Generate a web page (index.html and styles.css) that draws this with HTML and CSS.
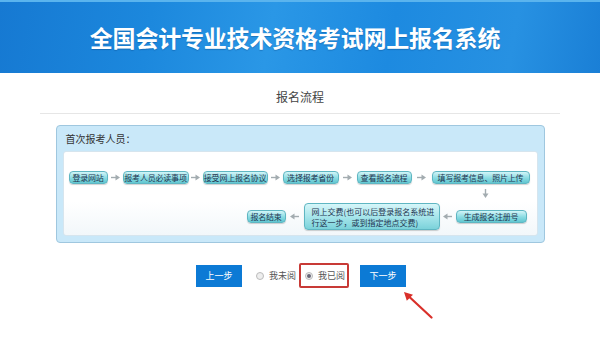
FILE: index.html
```html
<!DOCTYPE html>
<html lang="zh-CN">
<head>
    <meta charset="UTF-8">
    <title>全国会计专业技术资格考试网上报名系统</title>
    <link rel="stylesheet" href="styles.css">
</head>
<body>
    <div class="header">
        <h1>全国会计专业技术资格考试网上报名系统</h1>
    </div>

    <div class="sub-title">报名流程</div>

    <div class="panel">
        <div class="panel-head">首次报考人员：</div>
        <div class="panel-body">
            <!-- first row, left to right -->
            <div class="row row-top">
                <span class="step" style="width:39px">登录网站</span>
                <span class="arr" style="width:15px"><svg width="9" height="7" viewBox="0 0 9 7"><path d="M0 3.5h5" stroke="#a3acb0" stroke-width="1.4"/><path d="M4.5 .5L9 3.5 4.5 6.5z" fill="#a3acb0"/></svg></span>
                <span class="step" style="width:66px">报考人员必读事项</span>
                <span class="arr" style="width:14px"><svg width="9" height="7" viewBox="0 0 9 7"><path d="M0 3.5h5" stroke="#a3acb0" stroke-width="1.4"/><path d="M4.5 .5L9 3.5 4.5 6.5z" fill="#a3acb0"/></svg></span>
                <span class="step" style="width:65px">接受网上报名协议</span>
                <span class="arr" style="width:15px"><svg width="9" height="7" viewBox="0 0 9 7"><path d="M0 3.5h5" stroke="#a3acb0" stroke-width="1.4"/><path d="M4.5 .5L9 3.5 4.5 6.5z" fill="#a3acb0"/></svg></span>
                <span class="step" style="width:56px">选择报考省份</span>
                <span class="arr" style="width:18px"><svg width="9" height="7" viewBox="0 0 9 7"><path d="M0 3.5h5" stroke="#a3acb0" stroke-width="1.4"/><path d="M4.5 .5L9 3.5 4.5 6.5z" fill="#a3acb0"/></svg></span>
                <span class="step" style="width:55px">查看报名流程</span>
                <span class="arr" style="width:20px"><svg width="9" height="7" viewBox="0 0 9 7"><path d="M0 3.5h5" stroke="#a3acb0" stroke-width="1.4"/><path d="M4.5 .5L9 3.5 4.5 6.5z" fill="#a3acb0"/></svg></span>
                <span class="step" style="width:98px">填写报考信息、照片上传</span>
            </div>

            <div class="row row-down">
                <svg width="7" height="9" viewBox="0 0 7 9"><path d="M3.5 0v5" stroke="#a3acb0" stroke-width="1.4"/><path d="M.5 4.5L3.5 9 6.5 4.5z" fill="#a3acb0"/></svg>
            </div>

            <!-- second row, right to left -->
            <div class="row row-bottom">
                <span class="step" style="width:39px">报名结束</span>
                <span class="arr" style="width:18px"><svg width="9" height="7" viewBox="0 0 9 7"><path d="M4 3.5h5" stroke="#a3acb0" stroke-width="1.4"/><path d="M4.5 .5L0 3.5 4.5 6.5z" fill="#a3acb0"/></svg></span>
                <span class="step step-tall" style="width:136px">网上交费(也可以后登录报名系统进<br>行这一步，或到指定地点交费)</span>
                <span class="arr" style="width:16px"><svg width="9" height="7" viewBox="0 0 9 7"><path d="M4 3.5h5" stroke="#a3acb0" stroke-width="1.4"/><path d="M4.5 .5L0 3.5 4.5 6.5z" fill="#a3acb0"/></svg></span>
                <span class="step" style="width:71px">生成报名注册号</span>
            </div>
        </div>
    </div>

    <div class="actions">
        <a class="btn" href="#">上一步</a>
        <label class="choice first"><span class="radio"></span>我未阅</label>
        <label class="choice picked"><span class="radio on"></span>我已阅</label>
        <a class="btn btn-next" href="#">下一步</a>
    </div>

    <!-- annotation arrow pointing at the next button -->
    <div class="mark-row">
        <svg width="30" height="28" viewBox="0 0 30 28"><line x1="28.5" y1="26.5" x2="7" y2="6.5" stroke="#d9302a" stroke-width="2.2" stroke-linecap="round"></line><polygon points="1,1 10,3.8 3.8,9.8" fill="#d9302a"></polygon></svg>
    </div>
</body>
</html>
```

FILE: styles.css
```css
body {
    margin: 0;
    font-family: "Noto Sans CJK SC", "Noto Sans", sans-serif;
    background: #fff;
    color: #333;
}
.header {
    height: 71px;
    border-top: 2px solid #5ab4ee;
    background: linear-gradient(100deg, #1679d2 0%, #1c88dd 25%, #2a97e6 45%, #1d8ae0 65%, #2791e2 85%, #1a7fd6 100%);
    display: flex;
    align-items: center;
    justify-content: center;
    padding-right: 10px;
}
.header h1 {
    margin: 0 0 1px 0;
    font-size: 23px;
    font-weight: bold;
    color: #fff;
    letter-spacing: -0.2px;
    text-shadow: 0 1px 1px rgba(0, 60, 120, 0.35);
}
.sub-title {
    margin: 0 40px;
    height: 24px;
    padding-top: 16px;
    line-height: 16px;
    font-size: 12px;
    color: #444;
    text-align: center;
    border-bottom: 1px solid #e6e6e6;
}
.panel {
    width: 487px;
    margin: 11px auto 0;
    border: 1px solid #9fc7df;
    border-radius: 4px;
    background: #c9e8f9;
    padding-bottom: 6px;
}
.panel-head {
    height: 25px;
    line-height: 25px;
    padding-left: 9px;
    font-size: 10px;
    color: #333;
}
.panel-body {
    margin: 0 6px;
    height: 65px;
    border: 1px solid #d6e5ee;
    border-radius: 3px;
    background: linear-gradient(#fff 60%, #f2f7fa);
    padding-top: 18px;
}
.row {
    display: flex;
    align-items: center;
}
.row-top {
    height: 14px;
    padding-left: 5px;
}
.row-down {
    height: 19px;
    justify-content: flex-end;
    padding-right: 48px;
}
.row-bottom {
    height: 27px;
    justify-content: flex-end;
    padding-right: 10px;
}
.arr {
    display: flex;
    justify-content: center;
    align-items: center;
}
.step {
    height: 13px;
    box-sizing: border-box;
    display: flex;
    align-items: center;
    justify-content: center;
    white-space: nowrap;
    font-size: 8px;
    letter-spacing: -0.2px;
    color: #1f3550;
    background: linear-gradient(#d3f5f8, #8adbe2 55%, #62c7d1);
    border: 1px solid #5fb6c2;
    border-radius: 4px;
    box-shadow: 0 1px 1px rgba(0, 0, 0, 0.18);
}
.step-tall {
    height: 27px;
    display: block;
    text-align: left;
    padding: 2px 0 0 7px;
    line-height: 11px;
    letter-spacing: 0;
    background: linear-gradient(#d6f6f9, #9fe2e8 60%, #7bd2da);
}
.actions {
    margin-top: 20px;
    display: flex;
    align-items: center;
    justify-content: center;
    padding-left: 2px;
}
.btn {
    display: block;
    width: 46px;
    height: 22px;
    line-height: 22px;
    text-align: center;
    font-size: 9px;
    color: #fff;
    background: #0c7ad5;
    text-decoration: none;
}
.btn-next {
    margin-left: 11px;
}
.mark-row {
    padding: 3px 0 0 403px;
}
.mark-row svg {
    display: block;
}
.choice {
    display: flex;
    align-items: center;
    font-size: 9px;
    color: #555;
    height: 21px;
    white-space: nowrap;
}
.choice .radio {
    width: 6px;
    height: 6px;
    border: 1px solid #bbb;
    border-radius: 50%;
    background: #eee;
    margin-right: 5px;
    position: relative;
}
.choice .radio.on::after {
    content: "";
    position: absolute;
    left: 1px;
    top: 1px;
    width: 4px;
    height: 4px;
    border-radius: 50%;
    background: #667;
}
.first {
    margin-left: 14px;
    margin-right: 3px;
}
.picked {
    border: 2px solid #c83a36;
    border-radius: 2px;
    padding: 0 2px 0 4px;
}
```
